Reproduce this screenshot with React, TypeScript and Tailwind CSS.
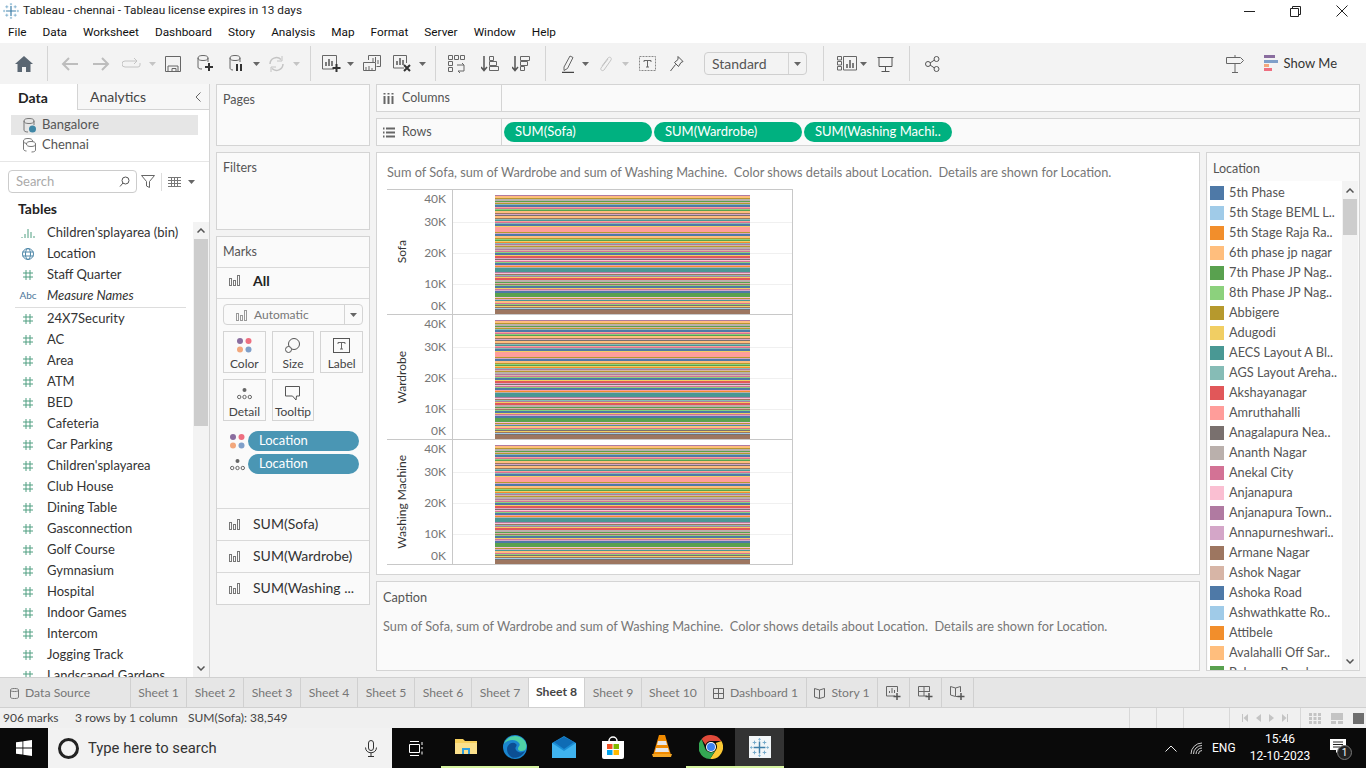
import type { ReactNode } from "react";

const palette = [
  "#4e79a7", "#a0cbe8", "#f28e2b", "#ffbe7d", "#59a14f", "#8cd17d", "#b6992d", "#f1ce63", "#499894", "#86bcb6",
  "#e15759", "#ff9d9a", "#79706e", "#bab0ac", "#d37295", "#fabfd2", "#b07aa1", "#d4a6c8", "#9d7660", "#d7b5a6",
];

const uiFont = "font-['Roboto','Liberation_Sans',sans-serif]";
const bookFont = "font-['Lato','Open_Sans',sans-serif]";

const legendItems = [
  "5th Phase", "5th Stage BEML L..", "5th Stage Raja Ra..", "6th phase jp nagar", "7th Phase JP Nag..", "8th Phase JP Nag..",
  "Abbigere", "Adugodi", "AECS Layout A Bl..", "AGS Layout Areha..", "Akshayanagar", "Amruthahalli",
  "Anagalapura Nea..", "Ananth Nagar", "Anekal City", "Anjanapura", "Anjanapura Town..", "Annapurneshwari..",
  "Armane Nagar", "Ashok Nagar", "Ashoka Road", "Ashwathkatte Ro..", "Attibele", "Avalahalli Off Sar..", "Balagere Road",
];

const tableFields = ["24X7Security", "AC", "Area", "ATM", "BED", "Cafeteria", "Car Parking", "Children'splayarea", "Club House", "Dining Table", "Gasconnection", "Golf Course", "Gymnasium", "Hospital", "Indoor Games", "Intercom", "Jogging Track", "Landscaped Gardens"];

// fixed bands seen in the bar, everything else is seeded noise
const bands = [
  { from: 32, to: 37, color: "#ff9d9a" },
  { from: 73, to: 77, color: "#499894" },
  { from: 98, to: 102, color: "#59a14f" },
  { from: 115, to: 119, color: "#9d7660" },
];

function buildStripes() {
  let seed = 41;
  const out: { y: number; h: number; color: string }[] = [];
  let y = 0;
  while (y < 119) {
    const band = bands.find((b) => b.from === y);
    if (band) {
      out.push({ y, h: band.to - band.from, color: band.color });
      y = band.to;
      continue;
    }
    seed = (seed * 1103 + 12345) % 65536;
    const nextIsBand = bands.some((b) => b.from === y + 1);
    const h = seed % 5 === 0 && !nextIsBand ? 2 : 1;
    out.push({ y, h, color: palette[(seed >> 3) % 20] });
    y += h;
  }
  return out;
}
const stripes = buildStripes();

function Svg({ w = 20, h = 20, children, className = "" }: { w?: number; h?: number; children: ReactNode; className?: string }) {
  return (
    <svg width={w} height={h} viewBox={`0 0 ${w} ${h}`} fill="none" className={`shrink-0 ${className}`}>
      {children}
    </svg>
  );
}

const Caret = ({ light }: { light?: boolean }) => (
  <Svg w={7} h={4}>
    <path d="M0 0h7L3.500 4z" fill={light ? "#c4c4c4" : "#666"} />
  </Svg>
);

const BarsIcon = ({ c = "#777" }: { c?: string }) => (
  <Svg w={11} h={12}>
    <rect x="0.5" y="4.5" width="2" height="7" stroke={c} />
    <rect x="4.5" y="6.5" width="2" height="5" stroke={c} />
    <rect x="8.5" y="1.5" width="2" height="10" stroke={c} />
  </Svg>
);

const HashIcon = () => (
  <Svg w={10} h={10}>
    <path d="M3 0v10M7 0v10M0 3h10M0 7h10" stroke="#4f9e80" />
  </Svg>
);

const ColorDots = () => (
  <Svg w={15} h={15}>
    <circle cx="3" cy="3" r="3" fill="#8a6d9f" />
    <circle cx="11.500" cy="3" r="3" fill="#ee6f80" />
    <circle cx="3" cy="11.500" r="3" fill="#f2a77c" />
    <circle cx="11.500" cy="11.500" r="3" fill="#7f9fc9" />
  </Svg>
);

const DetailDots = () => (
  <Svg w={15} h={13}>
    <circle cx="7.500" cy="3" r="2" fill="#666" />
    <circle cx="2.200" cy="10" r="1.700" stroke="#666" />
    <circle cx="7.500" cy="10" r="1.700" stroke="#666" />
    <circle cx="12.800" cy="10" r="1.700" stroke="#666" />
  </Svg>
);

const TBox = ({ dashed }: { dashed?: boolean }) => (
  <Svg w={17} h={15}>
    <rect x="0.5" y="0.5" width="16" height="14" stroke={dashed ? "#888" : "#555"} strokeDasharray={dashed ? "2 1" : undefined} />
    <path d="M5 4.500h7M8.500 4.500v6.500M7 11h3M5 4.500v1.500M12 4.500v1.500" stroke="#666" />
  </Svg>
);

function Slot({ className, children }: { className: string; children?: ReactNode }) {
  return <div className={`flex shrink-0 items-center justify-center ${className}`}>{children}</div>;
}

const Divider = () => <div className="h-[35px] w-px bg-[#d4d4d4]" />;

function Toolbar() {
  return (
    <div className="flex h-[41px] shrink-0 items-center bg-[#f3f3f3] pl-2 pr-[29px]">
      <Slot className="w-8">
        <Svg w={18} h={16}>
          <path d="M9 0L0 8h2.500v8h4.500v-5h4v5h4.500V8H18z" fill="#5a6672" />
        </Svg>
      </Slot>
      <Slot className="w-[15px]"><Divider /></Slot>
      <Slot className="w-[30px]">
        <Svg w={18} h={14}><path d="M17 7H2M8 1L2 7l6 6" stroke="#bdbdbd" strokeWidth="2" /></Svg>
      </Slot>
      <Slot className="w-8">
        <Svg w={18} h={14}><path d="M1 7h15M10 1l6 6-6 6" stroke="#bdbdbd" strokeWidth="2" /></Svg>
      </Slot>
      <Slot className="w-7">
        <Svg w={19} h={11}><path d="M14 3H3a2 2 0 0 0 0 6h13a2 2 0 0 0 2-2V5M12 0l3 3-3 3" stroke="#c4c4c4" /></Svg>
      </Slot>
      <Slot className="w-3.5"><Caret light /></Slot>
      <Slot className="w-7">
        <Svg w={16} h={16}><path d="M.5.500h15v15H.5zM3 15.500V10h10v5.500M7 12.500h4v3H7z" stroke="#666" /></Svg>
      </Slot>
      <Slot className="w-9">
        <Svg w={16} h={17}>
          <path d="M1 3v9c0 1.500 1.500 2 4 2M11 3v4" stroke="#666" />
          <ellipse cx="6" cy="3" rx="5" ry="2.500" stroke="#666" />
          <path d="M12 8v8M8 12h8" stroke="#333" strokeWidth="2" />
        </Svg>
      </Slot>
      <Slot className="w-[26px]">
        <Svg w={14} h={17}>
          <path d="M1 3v10c0 1 1 2 3 2M11 3v4" stroke="#666" />
          <ellipse cx="6" cy="3" rx="5" ry="2.500" stroke="#666" />
          <path d="M8 9v7M12 9v7" stroke="#333" strokeWidth="2" />
        </Svg>
      </Slot>
      <Slot className="w-3.5"><Caret /></Slot>
      <Slot className="w-[26px]">
        <Svg w={17} h={16}>
          <path d="M2 8a6.500 6.500 0 0 1 11-4.500M15 8a6.500 6.500 0 0 1-11 4.500" stroke="#c4c4c4" strokeWidth="1.500" />
          <path d="M14 0v5h-5M3 16v-5h5" stroke="#c4c4c4" />
        </Svg>
      </Slot>
      <Slot className="w-3.5"><Caret light /></Slot>
      <Slot className="w-3.5"><Divider /></Slot>
      <Slot className="w-7">
        <Svg w={19} h={18}>
          <path d="M12 14H.5V.5h14V9" stroke="#666" />
          <path d="M4 11V7M7 11V4M10 11V6" stroke="#555" strokeWidth="1.500" />
          <path d="M14.500 9v8M10.500 13h8" stroke="#333" strokeWidth="2" />
        </Svg>
      </Slot>
      <Slot className="w-2.5"><Caret /></Slot>
      <Slot className="w-[34px]">
        <Svg w={18} h={17}>
          <path d="M5.500 5V.5h12v11h-4" stroke="#666" />
          <path d="M.5 7.500h12v8H.5z" stroke="#666" fill="#f3f3f3" />
          <path d="M10 7V3M12.500 7V2M15 9V5" stroke="#666" />
          <path d="M3 15v-3M6 15v-4M9 15v-2" stroke="#666" />
        </Svg>
      </Slot>
      <Slot className="w-[26px]">
        <Svg w={19} h={17}>
          <path d="M11 13H.5V.5h13V8" stroke="#666" />
          <path d="M4 10V6M7 10V3M10 10V5" stroke="#555" strokeWidth="1.500" />
          <path d="M11 10l6 6M17 10l-6 6" stroke="#333" strokeWidth="2" />
        </Svg>
      </Slot>
      <Slot className="w-3.5"><Caret /></Slot>
      <Slot className="w-3"><Divider /></Slot>
      <Slot className="w-8">
        <Svg w={19} h={18}>
          <path d="M.5.500h4v4h-4zM6.500.500h4v4h-4zM12.500.500h4v4h-4zM.5 6.500h4v4h-4zM.5 12.500h4v4h-4z" stroke="#666" />
          <path d="M9 10h7l-2-2M16 10v6h-6l2 2" stroke="#666" />
        </Svg>
      </Slot>
      <Slot className="w-[34px]">
        <Svg w={18} h={17}>
          <path d="M3 1v14M0 12l3 3.500L6 12" stroke="#555" strokeWidth="1.500" />
          <path d="M8.500 1.500h4v4h-4zM8.500 6.500h7v4h-7zM8.500 11.500h9v4h-9z" stroke="#666" />
        </Svg>
      </Slot>
      <Slot className="w-7">
        <Svg w={18} h={17}>
          <path d="M3 1v14M0 12l3 3.500L6 12" stroke="#555" strokeWidth="1.500" />
          <path d="M8.500 1.500h9v4h-9zM8.500 6.500h7v4h-7zM8.500 11.500h4v4h-4z" stroke="#666" />
        </Svg>
      </Slot>
      <Slot className="w-5"><Divider /></Slot>
      <Slot className="w-[26px]">
        <Svg w={13} h={18}>
          <path d="M2 12L8 1l3 1.500-5.500 11L2 15.500z" stroke="#666" />
          <path d="M0 17.500h12" stroke="#444" strokeWidth="1.500" />
        </Svg>
      </Slot>
      <Slot className="w-2"><Caret /></Slot>
      <Slot className="w-8">
        <Svg w={13} h={17}>
          <path d="M3 11l6-8c2-2 4 0 3 2l-7 10c-1.500 1.500-4 0-3-2l7-9" stroke="#c4c4c4" />
        </Svg>
      </Slot>
      <Slot className="w-2"><Caret light /></Slot>
      <Slot className="w-9"><TBox dashed /></Slot>
      <Slot className="w-6">
        <Svg w={14} h={16}>
          <path d="M8 .500l5 5-2 1-2.500 4-4-4 3.500-3zM5.500 8.500L.5 15" stroke="#555" />
        </Svg>
      </Slot>
      <div className={`ml-[15px] flex h-[23px] w-[103px] shrink-0 items-center rounded-sm border border-[#cfcfcf] text-[14px] text-[#555] ${bookFont}`}>
        <span className="flex-1 pl-[7px]">Standard</span>
        <span className="flex h-full w-[18px] items-center justify-center border-l border-[#d4d4d4]"><Caret /></span>
      </div>
      <Slot className="w-8"><Divider /></Slot>
      <Slot className="w-4">
        <Svg w={20} h={15}>
          <path d="M.5.500h4v3.500h-4zM.5 5.500h4V9h-4zM.5 10.500h4v3.500h-4zM6.500.500h13v13.500h-13z" stroke="#666" />
          <path d="M10 12V8M13 12V4M16 12V7" stroke="#555" strokeWidth="1.500" />
        </Svg>
      </Slot>
      <Slot className="w-4"><Caret /></Slot>
      <Slot className="w-7">
        <Svg w={17} h={16}>
          <path d="M.5 1.500h16M2 1.500V10.500h13V1.500M8.500 10.500V15M4.500 15.500h8" stroke="#555" />
        </Svg>
      </Slot>
      <Slot className="w-5"><Divider /></Slot>
      <Slot className="w-[26px]">
        <Svg w={15} h={16}>
          <circle cx="11.500" cy="3" r="2.500" stroke="#555" />
          <circle cx="3" cy="8" r="2.500" stroke="#555" />
          <circle cx="11.500" cy="13" r="2.500" stroke="#555" />
          <path d="M5 7l4.500-3M5 9l4.500 3" stroke="#555" />
        </Svg>
      </Slot>
      <div className="flex-1" />
      <Svg w={18} h={18} className="mr-5">
        <path d="M9 0v2M.5 2.500h14l3 3-3 3H.5zM9 8.500v9M6 17.500h6" stroke="#666" />
      </Svg>
      <Svg w={14} h={17} className="mr-1.5">
        <rect width="11" height="3" fill="#8a6d9f" />
        <rect y="5" width="14" height="3" fill="#7f9fc9" />
        <rect y="9" width="5" height="3" fill="#f2a77c" />
        <rect y="13" width="8" height="3" fill="#ee6f80" />
      </Svg>
      <span className={`text-[13px] text-[#333] ${bookFont}`}>Show Me</span>
    </div>
  );
}

function FieldRow({ icon, label, italic }: { icon: ReactNode; label: string; italic?: boolean }) {
  return (
    <div className="flex h-[21px] shrink-0 items-center">
      <span className="flex w-[47px] shrink-0 justify-center pl-[9px]">{icon}</span>
      <span className={`whitespace-nowrap text-[#333] ${italic ? "italic" : ""}`}>{label}</span>
    </div>
  );
}

function DataPanel() {
  return (
    <aside className={`flex h-full w-[210px] shrink-0 flex-col border-r border-[#d4d4d4] bg-white text-[13px] ${bookFont}`}>
      <div className="flex h-[26px] shrink-0">
        <div className="flex w-[77px] items-center pl-[18px] text-[14px] font-bold text-[#222]">Data</div>
        <div className="flex flex-1 items-center justify-between border-b border-l border-[#d4d4d4] bg-[#f7f7f7] pr-2 pl-3 text-[14px] text-[#444]">
          Analytics
          <Svg w={6} h={10}><path d="M5.500.500L1 5l4.500 4.500" stroke="#666" /></Svg>
        </div>
      </div>
      <div className="flex flex-col border-b border-[#e6e6e6] px-[11px] pt-[5px] pb-1.5 text-[#555]">
        <div className="flex h-5 w-[187px] items-center gap-1.5 bg-[#e6e6e6] pl-3">
          <Svg w={13} h={15}>
            <ellipse cx="6" cy="3" rx="5" ry="2.500" stroke="#777" />
            <path d="M1 3v9c0 1 1 2 4 2M11 3v4" stroke="#777" />
            <circle cx="9.500" cy="11" r="3.500" fill="#3f87a6" />
          </Svg>
          Bangalore
        </div>
        <div className="flex h-5 items-center gap-1.5 pl-3">
          <Svg w={13} h={15}>
            <ellipse cx="5" cy="3" rx="4.500" ry="2.500" stroke="#777" />
            <ellipse cx="8" cy="6" rx="4.500" ry="2.500" stroke="#777" fill="white" />
            <path d="M.5 3v8c0 1 1 2 3 2M12.500 6v6c0 1-1 2-4 2" stroke="#777" />
          </Svg>
          Chennai
        </div>
      </div>
      <div className="mt-2 flex h-[23px] shrink-0 items-center pl-2">
        <div className="flex h-[23px] w-[129px] items-center justify-between rounded-sm border border-[#ccc] pr-1.5 pl-[7px] text-[#aaa]">
          Search
          <Svg w={11} h={11}><circle cx="6.500" cy="4.500" r="3.500" stroke="#555" /><path d="M4 7L1 10.500" stroke="#555" /></Svg>
        </div>
        <Svg w={14} h={13} className="ml-1"><path d="M.5.500h13L8.500 6.500v6l-3-1.500V6.500z" stroke="#666" /></Svg>
        <div className="ml-1.5 h-[18px] w-px bg-[#ddd]" />
        <Svg w={13} h={10} className="ml-1.5"><path d="M0 .500h13M0 3.500h13M0 6.500h13M0 9.500h13M3.500 0v10M6.500 0v10M9.500 0v10" stroke="#777" /></Svg>
        <Svg w={7} h={4} className="ml-[7px]"><path d="M0 0h7L3.500 4z" fill="#666" /></Svg>
      </div>
      <div className="mt-[2px] flex h-[27px] shrink-0 items-center pl-[18px] text-[14px] font-bold text-[#222]">Tables</div>
      <div className="flex min-h-0 flex-1 overflow-hidden">
        <div className="flex min-w-0 flex-1 flex-col overflow-hidden">
          <FieldRow
            label="Children'splayarea (bin)"
            icon={<Svg w={14} h={10}><path d="M1 9v1M4 6v4M7 1v9M10 4v6M13 8v2" stroke="#4f9e80" /></Svg>}
          />
          <FieldRow
            label="Location"
            icon={
              <Svg w={12} h={12}>
                <circle cx="6" cy="6" r="5.500" stroke="#4e87a8" />
                <ellipse cx="6" cy="6" rx="2.500" ry="5.500" stroke="#4e87a8" />
                <path d="M.5 4h11M.5 8h11" stroke="#4e87a8" />
              </Svg>
            }
          />
          <FieldRow label="Staff Quarter" icon={<HashIcon />} />
          <FieldRow label="Measure Names" italic icon={<span className="text-[10px] text-[#4e779a]">Abc</span>} />
          <div className="mx-[15px] mt-[1px] h-px w-[171px] shrink-0 bg-[#ddd]" />
          {tableFields.map((field) => (
            <FieldRow key={field} label={field} icon={<HashIcon />} />
          ))}
        </div>
        <div className="flex w-4 shrink-0 flex-col bg-[#f3f3f3]">
          <div className="flex h-[17px] items-center justify-center">
            <Svg w={8} h={5}><path d="M.5 4.500L4 1l3.500 3.500" stroke="#555" strokeWidth="1.500" /></Svg>
          </div>
          <div className="mx-px h-[187px] bg-[#cdcdcd]" />
          <div className="mt-auto flex h-[17px] items-center justify-center">
            <Svg w={8} h={5}><path d="M.5.500L4 4 7.500.500" stroke="#555" strokeWidth="1.500" /></Svg>
          </div>
        </div>
      </div>
    </aside>
  );
}

function MarkButton({ label, icon }: { label: string; icon: ReactNode }) {
  return (
    <div className="flex h-[42px] flex-col items-center justify-between border border-[#d4d4d4] pt-[5px] text-[12px] leading-[16px] text-[#444]">
      <span className="flex h-[16px] items-center">{icon}</span>
      {label}
    </div>
  );
}

function MeasureRow({ label }: { label: string }) {
  return (
    <div className="flex h-8 items-center border-t border-[#d9d9d9] pb-0.5 pl-3">
      <span className="w-6"><BarsIcon /></span>
      <span className="text-[14px] text-[#333]">{label}</span>
    </div>
  );
}

function ShelvesColumn() {
  return (
    <div className={`flex w-[154px] shrink-0 flex-col gap-1.5 text-[12.5px] text-[#555] ${bookFont}`}>
      <div className="h-[62px] border border-[#d4d4d4] bg-[#fafafa] px-1.5 pt-1.5">Pages</div>
      <div className="h-[78px] border border-[#d4d4d4] bg-[#fafafa] px-1.5 pt-1.5">Filters</div>
      <div className="h-[369px] border border-[#d4d4d4] bg-[#fafafa]">
        <div className="flex h-[30px] items-center px-1.5">Marks</div>
        <div className="flex h-[31px] items-center border-t border-[#d9d9d9] pb-1.5 pl-3">
          <span className="w-6"><BarsIcon /></span>
          <span className="text-[14px] font-bold text-[#222]">All</span>
        </div>
        <div className="border-t border-[#d9d9d9] px-1.5 pt-[5px]">
          <div className="flex h-[21px] items-center rounded-sm border border-[#d4d4d4] bg-[#fafafa] text-[12px]">
            <span className="mr-[7px] ml-3"><BarsIcon c="#999" /></span>
            <span className="flex-1 text-[#777]">Automatic</span>
            <span className="flex h-full w-[18px] items-center justify-center border-l border-[#d4d4d4]"><Caret /></span>
          </div>
          <div className="mt-1.5 grid grid-cols-3 gap-1.5">
            <MarkButton label="Color" icon={<ColorDots />} />
            <MarkButton label="Size" icon={
              <Svg w={15} h={15}>
                <circle cx="9" cy="6" r="5.500" stroke="#555" />
                <circle cx="3.500" cy="11.500" r="3" stroke="#555" fill="#fafafa" />
              </Svg>
            } />
            <MarkButton label="Label" icon={<TBox />} />
            <MarkButton label="Detail" icon={<DetailDots />} />
            <MarkButton label="Tooltip" icon={
              <Svg w={15} h={15}><path d="M.5.500h14v9.500h-3l-.5 4-3.500-4H.5z" stroke="#555" /></Svg>
            } />
          </div>
          <div className="mt-[10px] flex flex-col gap-[3px] pr-1 pl-[7px] text-[13px] text-white">
            <div className="flex items-center">
              <span className="flex w-[18px] shrink-0"><ColorDots /></span>
              <span className="flex h-5 flex-1 items-center rounded-full bg-[#4a96b4] pl-[11px]">Location</span>
            </div>
            <div className="flex items-center">
              <span className="flex w-[18px] shrink-0"><DetailDots /></span>
              <span className="flex h-5 flex-1 items-center rounded-full bg-[#4a96b4] pl-[11px]">Location</span>
            </div>
          </div>
        </div>
        <div className="mt-[34px]">
          <MeasureRow label="SUM(Sofa)" />
          <MeasureRow label="SUM(Wardrobe)" />
          <MeasureRow label="SUM(Washing ..." />
        </div>
      </div>
    </div>
  );
}

function Shelf({ icon, label, pills }: { icon: ReactNode; label: string; pills?: string[] }) {
  return (
    <div className="flex h-[28px] shrink-0 border border-[#d4d4d4] bg-[#fafafa]">
      <div className="flex w-[125px] shrink-0 items-center gap-[7px] border-r border-[#d4d4d4] pl-[6px] text-[12.5px] text-[#555]">
        {icon}
        {label}
      </div>
      <div className="flex items-center gap-0.5 pl-0.5">
        {pills?.map((pill) => (
          <span key={pill} className="flex h-5 w-[148px] items-center rounded-full bg-[#00b180] pl-[11px] text-[13px] text-white">
            {pill}
          </span>
        ))}
      </div>
    </div>
  );
}

const ticks = [
  { label: "40K", top: 1 },
  { label: "30K", top: 24 },
  { label: "20K", top: 55 },
  { label: "10K", top: 86 },
  { label: "0K", top: 108 },
];

function Pane({ title }: { title: string }) {
  return (
    <div className="flex h-[125px] border-b border-[#c8c8c8]">
      <div className="flex w-[30px] shrink-0 items-center justify-center text-[12px] text-[#333]">
        <span className="rotate-180 whitespace-nowrap [writing-mode:vertical-rl]">{title}</span>
      </div>
      <div className="relative w-9 shrink-0 border-r border-[#c8c8c8]">
        {ticks.map((t) => (
          <span key={t.label} className="absolute right-[6px] text-[12px] leading-[16px] text-[#777]" style={{ top: t.top }}>
            {t.label}
          </span>
        ))}
      </div>
      <svg width="339" height="124" className="block shrink-0">
        <path d="M0 32.500h339M0 63.500h339M0 94.500h339" stroke="#f0f0f0" />
        {stripes.map((s) => (
          <rect key={s.y} x="42" y={s.y + 5} width="255" height={s.h} fill={s.color} shapeRendering="crispEdges" />
        ))}
      </svg>
    </div>
  );
}

function ChartArea() {
  return (
    <div className={`flex min-w-0 flex-1 flex-col gap-1.5 ${bookFont}`}>
      <Shelf
        label="Columns"
        icon={<Svg w={12} h={11}><path d="M1.500 3v8M5.500 3v8M9.500 3v8M1.500 0v1.500M5.500 0v1.500M9.500 0v1.500" stroke="#666" strokeWidth="2" /></Svg>}
      />
      <Shelf
        label="Rows"
        pills={["SUM(Sofa)", "SUM(Wardrobe)", "SUM(Washing Machi.."]}
        icon={<Svg w={12} h={11}><path d="M3 1.500h9M3 5.500h9M3 9.500h9M0 1.500h1.500M0 5.500h1.500M0 9.500h1.500" stroke="#666" strokeWidth="2" /></Svg>}
      />
      <div className="flex min-h-0 flex-1 gap-1.5">
        <div className="flex w-[824px] shrink-0 flex-col gap-1.5">
          <div className="h-[423px] border border-[#d4d4d4] bg-white px-2.5 pt-[11px]">
            <div className="whitespace-nowrap text-[12.75px] leading-[16px] text-[#777]">
              Sum of Sofa, sum of Wardrobe and sum of Washing Machine.&nbsp; Color shows details about Location.&nbsp; Details are shown for Location.
            </div>
            <div className="mt-[9px] w-[406px] border-t border-r border-[#c8c8c8]">
              <Pane title="Sofa" />
              <Pane title="Wardrobe" />
              <Pane title="Washing Machine" />
            </div>
          </div>
          <div className="h-[90px] border border-[#d4d4d4] bg-[#fafafa] px-1.5 pt-[7px] text-[12.75px] text-[#555]">
            <div className="leading-[16px]">Caption</div>
            <div className="mt-[13px] whitespace-nowrap leading-[16px] text-[#777]">
              Sum of Sofa, sum of Wardrobe and sum of Washing Machine.&nbsp; Color shows details about Location.&nbsp; Details are shown for Location.
            </div>
          </div>
        </div>
        <div className="flex h-[519px] flex-1 flex-col border border-[#d4d4d4] bg-[#fafafa]">
          <div className="flex h-7 shrink-0 items-center px-1.5 pt-1 text-[12.5px] text-[#555]">Location</div>
          <div className="mx-px flex min-h-0 flex-1 bg-white">
            <div className="min-w-0 flex-1 overflow-hidden pt-[2px] pl-[2px]">
              {legendItems.map((name, i) => (
                <div key={name} className="flex h-5 items-center gap-[5px] whitespace-nowrap text-[12.75px] text-[#555]">
                  <span className="h-3.5 w-3.5 shrink-0" style={{ backgroundColor: palette[i % 20] }} />
                  {name}
                </div>
              ))}
            </div>
            <div className="flex w-4 shrink-0 flex-col bg-[#f3f3f3]">
              <div className="flex h-[18px] items-center justify-center">
                <Svg w={8} h={5}><path d="M.5 4.500L4 1l3.500 3.500" stroke="#555" strokeWidth="1.500" /></Svg>
              </div>
              <div className="mx-px h-9 bg-[#cdcdcd]" />
              <div className="mt-auto flex h-[18px] items-center justify-center">
                <Svg w={8} h={5}><path d="M.5.500L4 4 7.500.500" stroke="#555" strokeWidth="1.500" /></Svg>
              </div>
            </div>
          </div>
        </div>
      </div>
    </div>
  );
}

function Tab({ className, active, children }: { className: string; active?: boolean; children: ReactNode }) {
  return (
    <div className={`flex h-full shrink-0 items-center justify-center gap-1.5 whitespace-nowrap border-r border-[#d0d0d0] ${active ? "bg-white font-bold text-[#444]" : "pt-px text-[#777]"} ${className}`}>
      {children}
    </div>
  );
}

function Tabs() {
  return (
    <div className={`flex h-[31px] shrink-0 border-y border-[#d0d0d0] bg-[#e6e6e6] text-[12.2px] ${bookFont}`}>
      <Tab className="w-[131px] !justify-start pl-[10px]">
        <Svg w={9} h={11}><path d="M.5 2v7c0 1 1 1.500 4 1.500s4-.5 4-1.500V2M.5 2c0-1 1-1.500 4-1.500s4 .5 4 1.500-1 1.500-4 1.500-4-.5-4-1.500z" stroke="#777" /></Svg>
        Data Source
      </Tab>
      <Tab className="w-[56px]">Sheet 1</Tab>
      {["Sheet 2", "Sheet 3", "Sheet 4", "Sheet 5", "Sheet 6", "Sheet 7"].map((s) => (
        <Tab key={s} className="w-[57px]">{s}</Tab>
      ))}
      <Tab className="w-[56px]" active>Sheet 8</Tab>
      <Tab className="w-[57px]">Sheet 9</Tab>
      <Tab className="w-[63px]">Sheet 10</Tab>
      <Tab className="w-[102px]">
        <Svg w={11} h={11}><path d="M.5.500h10v10H.5zM.5 5.500h10M5.500.500v10" stroke="#666" /></Svg>
        Dashboard 1
      </Tab>
      <Tab className="w-[71px]">
        <Svg w={11} h={11}><path d="M5.500 2L.5.500v8.500l5 1.500 5-1.500V.500zM5.500 2v8.500" stroke="#666" /></Svg>
        Story 1
      </Tab>
      <Tab className="w-8">
        <Svg w={15} h={14}><path d="M9 10H.5V.5h11V6M3.500 7V5M6 7V2M8.500 7V4" stroke="#666" /><path d="M11 7v7M7.500 10.500h7" stroke="#555" strokeWidth="1.500" /></Svg>
      </Tab>
      <Tab className="w-8">
        <Svg w={15} h={14}><path d="M9 10H.5V.5h11V6M.5 5.500h11M6 .5V10" stroke="#666" /><path d="M11 7v7M7.500 10.500h7" stroke="#555" strokeWidth="1.500" /></Svg>
      </Tab>
      <Tab className="w-8">
        <Svg w={15} h={14}><path d="M9 10.500H5.500L.5 9V.5l5 1.500 5-1.500V6M5.500 2v8" stroke="#666" /><path d="M11 7v7M7.500 10.500h7" stroke="#555" strokeWidth="1.500" /></Svg>
      </Tab>
    </div>
  );
}

function StatusBar() {
  return (
    <div className={`flex h-5 shrink-0 items-center bg-[#f0f0f0] text-[12px] text-[#444] ${bookFont}`}>
      <span className="ml-[3px] w-[72px]">906 marks</span>
      <span className="w-[113px]">3 rows by 1 column</span>
      <span>SUM(Sofa): 38,549</span>
      <div className="flex-1" />
      <div className="flex h-full items-center">
        <span className="h-full w-[27px] border-l border-[#d8d8d8]" />
        <span className="h-full w-[27px] border-l border-[#d8d8d8]" />
        <span className="h-full w-[46px] border-l border-[#d8d8d8]" />
        <span className="flex h-full w-[71px] items-center justify-around border-l border-[#d8d8d8] px-2">
          <Svg w={6} h={8}><path d="M6 0v8L1.500 4zM0 0h1v8H0z" fill="#c4c4c4" /></Svg>
          <Svg w={5} h={8}><path d="M5 0v8L0 4z" fill="#c4c4c4" /></Svg>
          <Svg w={5} h={8}><path d="M0 0v8l5-4z" fill="#c4c4c4" /></Svg>
          <Svg w={6} h={8}><path d="M0 0v8l4.500-4zM5 0h1v8H5z" fill="#c4c4c4" /></Svg>
        </span>
        <span className="flex h-full items-center gap-[10px] border-l border-[#d8d8d8] pr-[2px] pl-[8px]">
          <Svg w={12} h={11}><path d="M0 0h3v3H0zM4.500 0h3v3h-3zM9 0h3v3H9zM0 4h3v3H0zM4.500 4h3v3h-3zM9 4h3v3H9zM0 8h3v3H0zM4.500 8h3v3h-3zM9 8h3v3H9z" fill="#c4c4c4" /></Svg>
          <Svg w={12} h={11}><path d="M0 0h12v7H0zM0 8h5v3H0zM7 8h5v3H7z" fill="#c4c4c4" /></Svg>
          <Svg w={11} h={11}><path d="M0 0h11v11H0z" fill="#6e6e6e" /></Svg>
        </span>
      </div>
    </div>
  );
}

function TaskSlot({ running, active, children }: { running?: boolean; active?: boolean; children: ReactNode }) {
  return (
    <div className={`flex h-full w-[49px] shrink-0 items-center justify-center border-b-2 ${running ? "border-[#d6f3a0]" : "border-transparent"} ${active ? "bg-[#333]" : ""}`}>
      {children}
    </div>
  );
}

const TableauMark = ({ s = 16 }: { s?: number }) => (
  <svg width={s} height={s} viewBox="0 0 21 21" fill="none" className="shrink-0">
    <path d="M10.500 4v13M4 10.500h13" stroke="#3f7fa8" strokeWidth="1.600" />
    <path d="M10.500 0v3M9 1.500h3M10.500 18v3M9 19.500h3M0 10.500h3M1.500 9v3M18 10.500h3M19.500 9v3" stroke="#7fb2cf" />
    <path d="M5 3v4M3 5h4M16 3v4M14 5h4M5 14v4M3 16h4M16 14v4M14 16h4" stroke="#6ea6c6" />
  </svg>
);

function Taskbar() {
  return (
    <div className={`flex h-10 shrink-0 items-center bg-[#0a0a0a] ${uiFont}`}>
      <div className="flex w-12 justify-center">
        <Svg w={16} h={16}>
          <path d="M0 2.300l6.500-.9v6.200H0zM7.300 1.300L16 0v7.600H7.300zM0 8.400h6.500v6.200L0 13.700zM7.300 8.400H16V16l-8.700-1.200z" fill="#fff" />
        </Svg>
      </div>
      <div className="flex h-full w-[344px] items-center bg-[#f2f2f2] pr-[15px] pl-[10px]">
        <span className="h-[21px] w-[21px] rounded-full border-[3px] border-[#222]" />
        <span className="ml-[9px] flex-1 pt-px text-[14.8px] text-[#333]">Type here to search</span>
        <Svg w={12} h={17}>
          <rect x="3.500" y=".5" width="5" height="10" rx="2.500" stroke="#333" />
          <path d="M.5 7.500c0 7 11 7 11 0M6 13v3.500M3 16.500h6" stroke="#333" />
        </Svg>
      </div>
      <Slot className="w-[49px]">
        <Svg w={16} h={15}>
          <path d="M.5 3.500h10v8H.5zM1 .500h9M1 14.500h9M13 1v3M13 6v2M13 10.500v3" stroke="#fff" />
        </Svg>
      </Slot>
      <div className="flex h-full">
        <TaskSlot running>
          <Svg w={22} h={18}>
            <path d="M0 1h8l2 2h12v13H0z" fill="#f6cf5d" />
            <path d="M0 5h22v11H0z" fill="#fbe08c" />
            <path d="M7 10h8v6H7z" fill="#2f9fe0" />
            <path d="M9 12h4v4H9z" fill="#fbe08c" />
          </Svg>
        </TaskSlot>
        <TaskSlot running>
          <svg width="24" height="24" viewBox="0 0 24 24">
            <circle cx="12" cy="12" r="12" fill="#1a86d0" />
            <path d="M1 9C3 1 15-2 21 5c3 3 3 8 1 10-3 2-7 1-7-1 0-3 3-3 1-6-3-4-11-4-15 1z" fill="#4fd1a5" />
            <path d="M4 14c0-5 6-8 9-5 2 2-2 3 0 6 2 3 6 3 9 1-3 6-11 9-15 5-2-2-3-4-3-7z" fill="#0c4f93" />
          </svg>
        </TaskSlot>
        <TaskSlot>
          <Svg w={24} h={22}>
            <path d="M0 7l12-7 12 7v15H0z" fill="#1b8ed6" />
            <path d="M0 7l12 8 12-8v15H0z" fill="#3fb3ef" />
            <path d="M2 6l10-5 10 5-10 7z" fill="#0f6cb5" />
          </Svg>
        </TaskSlot>
        <TaskSlot>
          <Svg w={24} h={24}>
            <path d="M8 6a4 4 0 0 1 8 0" stroke="#fff" strokeWidth="1.500" />
            <path d="M1 6h22v16a2 2 0 0 1-2 2H3a2 2 0 0 1-2-2z" fill="#fff" />
            <path d="M6 9h5.500v5H6z" fill="#f25022" />
            <path d="M12.500 9H18v5h-5.500z" fill="#7fba00" />
            <path d="M6 15h5.500v5H6z" fill="#00a4ef" />
            <path d="M12.500 15H18v5h-5.500z" fill="#ffb900" />
          </Svg>
        </TaskSlot>
        <TaskSlot>
          <Svg w={20} h={24}>
            <path d="M7 0h6l6 20H1z" fill="#f08a00" />
            <path d="M6 6h8l1 4H5zM4 13h12l1 4H3z" fill="#e6e6e6" />
            <path d="M0 19h20l-1 3H1z" fill="#f5a623" />
          </Svg>
        </TaskSlot>
        <TaskSlot running>
          <svg width="24" height="24" viewBox="0 0 24 24">
            <path d="M12 0a12 12 0 0 1 10.400 6H12a6 6 0 0 0-5.600 3.800L2.600 4A12 12 0 0 1 12 0z" fill="#e04a3a" />
            <path d="M22.400 6A12 12 0 0 1 11 24l5.300-8a6 6 0 0 0 .4-8z" fill="#fcc934" />
            <path d="M2.600 4A12 12 0 0 0 11 24l5.200-8.400a6 6 0 0 1-9.800-1.300z" fill="#34a853" />
            <circle cx="12" cy="12" r="5" fill="#fff" />
            <circle cx="12" cy="12" r="4" fill="#3e82f1" />
          </svg>
        </TaskSlot>
        <TaskSlot running active>
          <div className="flex h-[22px] w-[22px] items-center justify-center bg-[#f2f6f8]"><TableauMark s={19} /></div>
        </TaskSlot>
      </div>
      <div className="ml-auto flex h-full items-center text-white">
        <Svg w={12} h={7}><path d="M.5 6.500L6 1l5.500 5.500" stroke="#eee" /></Svg>
        <Svg w={13} h={13} className="ml-[13px]">
          <path d="M1 12a11 11 0 0 1 11-11M3.500 12A8.500 8.500 0 0 1 12 3.500M6 12a6 6 0 0 1 6-6M8.500 12A3.500 3.500 0 0 1 12 8.500" stroke="#ccc" />
        </Svg>
        <span className="ml-[9px] w-[29px] text-[12px]">ENG</span>
        <div className="ml-[6px] flex w-[66px] flex-col items-center text-[12px] leading-[17px]">
          <span>15:46</span>
          <span className="whitespace-nowrap">12-10-2023</span>
        </div>
        <div className="relative mr-[20px] ml-[17px] h-[18px] w-[16px]">
          <Svg w={16} h={14}><path d="M0 0h16v11H9l-3 3v-3H0z" fill="#fff" /><path d="M3 3h10M3 5.500h10M3 8h7" stroke="#222" /></Svg>
          <span className="absolute top-[6px] left-[7px] flex h-[15px] w-[15px] items-center justify-center rounded-full border border-[#777] bg-[#222] text-[10px]">1</span>
        </div>
      </div>
    </div>
  );
}

export default function App() {
  return (
    <div className="flex h-[768px] w-[1366px] flex-col overflow-hidden bg-[#f3f3f3]">
      <div className={`flex h-[22px] shrink-0 items-center bg-white pr-[18px] pl-[3px] text-[11.8px] text-[#222] ${uiFont}`}>
        <TableauMark />
        <span className="ml-1">Tableau - chennai - Tableau license expires in 13 days</span>
        <div className="ml-auto flex items-center gap-[35px]">
          <Svg w={11} h={1}><path d="M0 .500h11" stroke="#222" /></Svg>
          <Svg w={11} h={11}><path d="M.5 2.500h8v8h-8zM2.500 2.500v-2h8v8h-2" stroke="#222" /></Svg>
          <Svg w={12} h={12}><path d="M.5.500l11 11M11.500.500l-11 11" stroke="#222" /></Svg>
        </div>
      </div>
      <div className={`flex h-[21px] shrink-0 items-center gap-4 bg-white pl-2 text-[11.8px] text-[#111] ${uiFont}`}>
        {["File", "Data", "Worksheet", "Dashboard", "Story", "Analysis", "Map", "Format", "Server", "Window", "Help"].map((m) => (
          <span key={m}>{m}</span>
        ))}
      </div>
      <Toolbar />
      <div className="flex min-h-0 flex-1 gap-1.5 pr-1.5">
        <DataPanel />
        <ShelvesColumn />
        <ChartArea />
      </div>
      <Tabs />
      <StatusBar />
      <Taskbar />
    </div>
  );
}
